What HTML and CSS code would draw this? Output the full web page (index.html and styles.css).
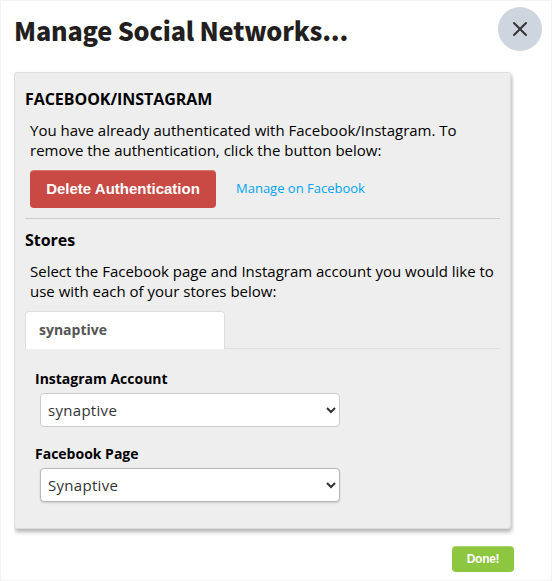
FILE: index.html
```html
<!DOCTYPE html>
<html lang="en">
<head>
    <meta charset="UTF-8">
    <meta name="viewport" content="width=device-width, initial-scale=1.0">
    <title>Manage Social Networks</title>
    <link rel="stylesheet" href="styles.css">
</head>
<body>
    <div class="modal">
        <!-- Title and close button -->
        <div class="modal-header">
            <h1>Manage Social Networks...</h1>
            <button class="close" aria-label="Close">
                <svg width="16" height="16" viewBox="0 0 16 16">
                    <path d="M2 2 L14 14 M14 2 L2 14" />
                </svg>
            </button>
        </div>

        <div class="modal-content">
            <div class="panel">
                <!-- Authentication -->
                <h2>FACEBOOK/INSTAGRAM</h2>
                <p>You have already authenticated with Facebook/Instagram. To remove the authentication, click the button below:</p>
                <div class="actions">
                    <button class="btn btn-delete">Delete Authentication</button>
                    <a href="#" class="manage-link">Manage on Facebook</a>
                </div>

                <!-- Stores -->
                <div class="stores">
                    <h2>Stores</h2>
                    <p>Select the Facebook page and Instagram account you would like to use with each of your stores below:</p>
                    <div class="tabs">
                        <div class="tab active">synaptive</div>
                    </div>
                    <div class="fields">
                        <label for="instagram">Instagram Account</label>
                        <select id="instagram">
                            <option>synaptive</option>
                        </select>
                        <label for="facebook">Facebook Page</label>
                        <select id="facebook" class="current">
                            <option>Synaptive</option>
                        </select>
                    </div>
                </div>
            </div>
        </div>

        <div class="modal-footer">
            <button class="btn btn-done">Done!</button>
        </div>
    </div>
</body>
</html>
```

FILE: styles.css
```css
* {
    box-sizing: border-box;
}

body {
    margin: 0;
    background-color: #fff;
    color: #000;
    font-family: "Open Sans", sans-serif;
    font-size: 15px;
}

.modal {
    width: 552px;
    height: 581px;
    padding: 6px 9px 0 13px;
    border: 1px solid #f3f3f3;
    overflow: hidden;
}

/* Header */
.modal-header {
    display: flex;
    justify-content: space-between;
    height: 60px;
}

h1 {
    margin: 3px 0 0;
    color: #231f20;
    font-family: "Noto Sans CJK SC", sans-serif;
    font-size: 25.2px;
    font-weight: 900;
    letter-spacing: -0.18px;
    line-height: 40px;
}

.close {
    display: flex;
    justify-content: center;
    align-items: center;
    width: 44px;
    height: 44px;
    padding: 0;
    border: none;
    border-radius: 50%;
    background-color: #ced5de;
}

.close path {
    fill: none;
    stroke: #333;
    stroke-width: 2;
    stroke-linecap: round;
}

/* The shadow is cut off at the sides of the content area */
.modal-content {
    width: 500px;
    height: 474px;
    padding-top: 5px;
    overflow: hidden;
}

.panel {
    width: 497px;
    height: 457px;
    padding: 16px 10px 0;
    border: 1px solid #ddd;
    border-radius: 3px;
    background-color: #eee;
    box-shadow: 1px 3px 4px rgba(0, 0, 0, 0.3);
}

h2 {
    margin: 0;
    font-size: 16px;
    font-weight: 700;
    letter-spacing: -0.05px;
    line-height: 20px;
}

p {
    margin: 11px 0 0 5px;
    line-height: 20px;
}

/* Buttons */
.btn {
    border: none;
    border-radius: 4px;
    color: #fff;
    font-family: "Liberation Sans", Arial, sans-serif;
    font-weight: bold;
    box-shadow: inset 0 1px 0 rgba(255, 255, 255, 0.25);
}

.btn-delete {
    width: 186px;
    height: 38px;
    padding: 0 0 2px;
    background-color: #c94a45;
    font-size: 15px;
}

.btn-done {
    width: 62px;
    height: 26px;
    padding: 0 0 1px;
    background-color: #8dc63f;
    font-size: 12px;
    letter-spacing: -0.3px;
}

.actions {
    display: flex;
    align-items: center;
    gap: 20px;
    margin: 10px 0 10px 5px;
}

.manage-link {
    padding-bottom: 2px;
    color: #00a4ef;
    font-size: 13px;
    text-decoration: none;
}

/* Stores section */
.stores {
    padding-top: 11px;
    border-top: 1px solid #ccc;
}

.tabs {
    display: flex;
    height: 39px;
    margin-top: 9px;
    border-bottom: 1px solid #ddd;
}

.tab {
    width: 200px;
    height: 38px;
    margin-top: 1px;
    padding-left: 13px;
    border: 1px solid #ddd;
    border-bottom: none;
    border-radius: 4px 4px 0 0;
    background-color: #fff;
    color: #555;
    font-size: 14px;
    font-weight: 700;
    line-height: 36px;
}

.fields {
    padding: 20px 10px 0;
}

label {
    display: block;
    font-size: 14px;
    font-weight: 700;
    line-height: 20px;
}

select {
    display: block;
    width: 300px;
    height: 34px;
    margin: 4px 0 17px 5px;
    padding: 3px;
    border: 1px solid #ccc;
    border-radius: 4px;
    background-color: #fff;
    color: #333;
    font-family: "Open Sans", sans-serif;
    font-size: 15px;
    letter-spacing: 0.3px;
}

.current {
    border-color: #b5b9b9;
    box-shadow: 0 1px 2px rgba(0, 0, 0, 0.15);
}

/* Footer */
.modal-footer {
    display: flex;
    justify-content: flex-end;
    width: 500px;
    margin-top: 5px;
}
```
